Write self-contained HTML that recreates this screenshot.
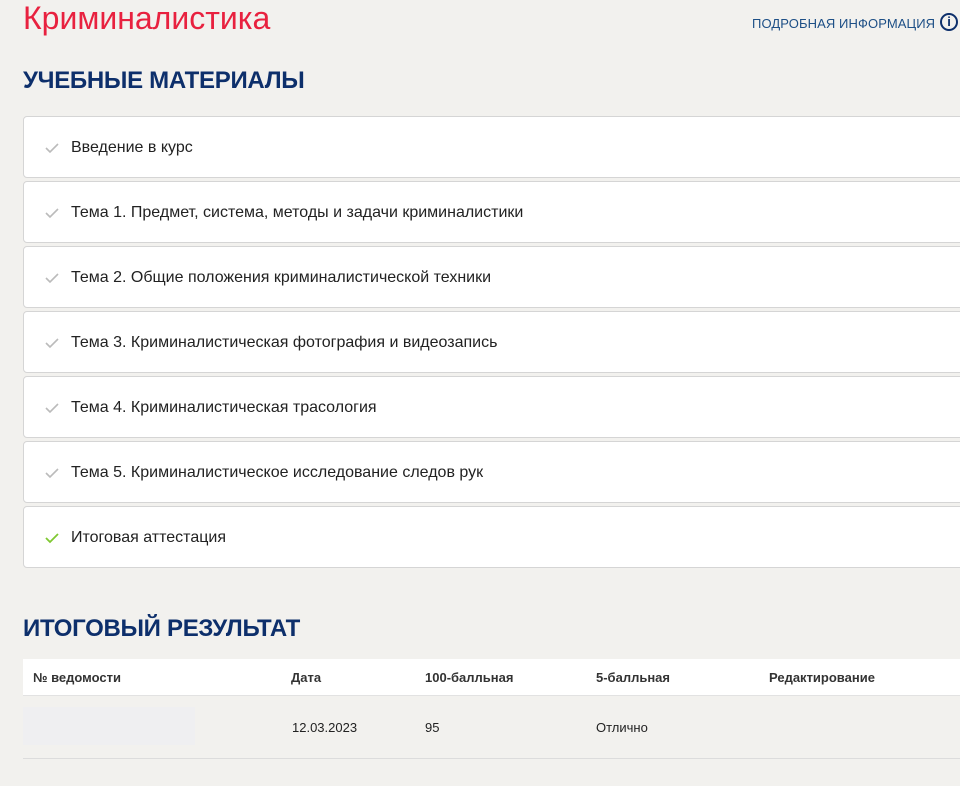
<!DOCTYPE html>
<html><head><meta charset="utf-8"><style>
body{margin:0;background:#f2f1ee;font-family:"Liberation Sans","DejaVu Sans",sans-serif;width:960px;height:786px;overflow:hidden;position:relative}
.t{position:absolute;left:23px;top:0px;font-size:32px;color:#e8213f;margin:0}
.info{position:absolute;left:752px;top:16px;font-size:13px;color:#1d4f86;letter-spacing:.1px}
.ic{position:absolute;left:940px;top:13px;width:18px;height:18px;border:2px solid #0d2f6b;border-radius:50%;box-sizing:border-box;color:#0d2f6b;font-weight:bold;font-size:13px;text-align:center;line-height:14px}
h2{position:absolute;left:23px;margin:0;font-size:24px;letter-spacing:-0.3px;color:#0d2f6b;font-weight:bold}
.card{position:absolute;left:23px;width:960px;height:62px;background:#fff;border:1px solid #d5d5d5;border-radius:4px;box-sizing:border-box}
.card span{position:absolute;left:47px;top:22px;font-size:16px;color:#222}
.card svg{position:absolute;left:20px;top:25px}
.th{position:absolute;left:23px;top:659px;width:937px;height:36px;background:#fff;border-bottom:1px solid #e2e2e2}
.c{position:absolute;font-size:13px;color:#222}
.h{font-weight:bold;color:#333}
</style></head><body>
<div class="t">Криминалистика</div>
<div class="info">ПОДРОБНАЯ ИНФОРМАЦИЯ</div>
<div class="ic">i</div>
<h2 style="top:67px">УЧЕБНЫЕ МАТЕРИАЛЫ</h2>
<div class="card" style="top:116px"><svg width="16" height="12"><path d="M2 6l4 4 8-8" stroke="#bbb" stroke-width="1.6" fill="none"/></svg><span>Введение в курс</span></div>
<div class="card" style="top:181px"><svg width="16" height="12"><path d="M2 6l4 4 8-8" stroke="#bbb" stroke-width="1.6" fill="none"/></svg><span>Тема 1. Предмет, система, методы и задачи криминалистики</span></div>
<div class="card" style="top:246px"><svg width="16" height="12"><path d="M2 6l4 4 8-8" stroke="#bbb" stroke-width="1.6" fill="none"/></svg><span>Тема 2. Общие положения криминалистической техники</span></div>
<div class="card" style="top:311px"><svg width="16" height="12"><path d="M2 6l4 4 8-8" stroke="#bbb" stroke-width="1.6" fill="none"/></svg><span>Тема 3. Криминалистическая фотография и видеозапись</span></div>
<div class="card" style="top:376px"><svg width="16" height="12"><path d="M2 6l4 4 8-8" stroke="#bbb" stroke-width="1.6" fill="none"/></svg><span>Тема 4. Криминалистическая трасология</span></div>
<div class="card" style="top:441px"><svg width="16" height="12"><path d="M2 6l4 4 8-8" stroke="#bbb" stroke-width="1.6" fill="none"/></svg><span>Тема 5. Криминалистическое исследование следов рук</span></div>
<div class="card" style="top:506px"><svg width="16" height="12"><path d="M2 6l4 4 8-8" stroke="#7fc832" stroke-width="1.8" fill="none"/></svg><span>Итоговая аттестация</span></div>
<h2 style="top:615px">ИТОГОВЫЙ РЕЗУЛЬТАТ</h2>
<div class="th"></div>
<div class="c h" style="left:33px;top:670px">№ ведомости</div>
<div class="c h" style="left:291px;top:670px">Дата</div>
<div class="c h" style="left:425px;top:670px">100-балльная</div>
<div class="c h" style="left:596px;top:670px">5-балльная</div>
<div class="c h" style="left:769px;top:670px">Редактирование</div>
<div style="position:absolute;left:23px;top:707px;width:172px;height:38px;background:#efeff1"></div>
<div class="c" style="left:292px;top:720px">12.03.2023</div>
<div class="c" style="left:425px;top:720px">95</div>
<div class="c" style="left:596px;top:720px">Отлично</div>
<div style="position:absolute;left:23px;top:758px;width:937px;height:1px;background:#dcdcdc"></div>
</body></html>
